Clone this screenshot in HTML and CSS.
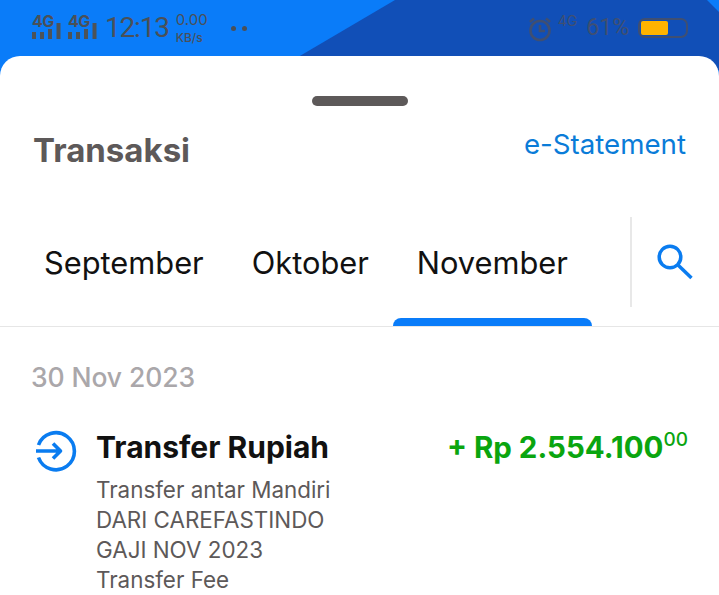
FILE: index.html
```html
<!DOCTYPE html>
<html lang="id">
<head>
  <meta charset="UTF-8">
  <meta name="viewport" content="width=device-width, initial-scale=1.0">
  <title>Transaksi</title>
  <link rel="stylesheet" href="styles.css">
</head>
<body>
  <div class="screen">
    <div class="status-bar">
      <div class="status-left">
        <div class="signal">
          <span class="signal-label">4G</span>
          <svg width="29" height="16" viewBox="0 0 29 16"><path d="M0 9h4v7H0zM8 9h4v7H8zM16 6h4v10h-4zM24.500 0h4v16h-4z" fill="#4d5358"/></svg>
        </div>
        <div class="signal">
          <span class="signal-label">4G</span>
          <svg width="29" height="16" viewBox="0 0 29 16"><path d="M0 9h4v7H0zM8 9h4v7H8zM16 6h4v10h-4zM24.500 0h4v16h-4z" fill="#4d5358"/></svg>
        </div>
        <span class="clock">12:13</span>
        <div class="speed">
          <span class="speed-value">0.00</span>
          <span class="speed-unit">KB/s</span>
        </div>
        <div class="dots"><span></span><span></span></div>
      </div>
      <div class="status-right">
        <svg class="alarm" width="26" height="26" viewBox="0 0 26 26" fill="none" stroke="#3f4f72" stroke-width="2.600">
          <circle cx="13" cy="14.500" r="9.500"/>
          <path d="M13 9v6h5M3 6l4-3.500M23 6l-4-3.500"/>
        </svg>
        <span class="net-small">4G</span>
        <span class="battery-text">61%</span>
        <div class="battery"><div class="battery-fill"></div></div>
      </div>
    </div>

    <div class="sheet">
      <div class="handle"></div>
      <div class="sheet-head">
        <h1>Transaksi</h1>
        <a class="statement">e-Statement</a>
      </div>
      <div class="tabs">
        <div class="tab">September</div>
        <div class="tab">Oktober</div>
        <div class="tab active">November</div>
        <div class="tab-search">
          <svg width="36" height="36" viewBox="0 0 36 36" fill="none" stroke="#0a7cf0" stroke-width="3.500">
            <circle cx="13" cy="13" r="10.800"/>
            <path d="M21 21l13.500 13"/>
          </svg>
        </div>
      </div>
      <div class="list">
        <div class="date">30 Nov 2023</div>
        <div class="trx">
          <svg class="trx-icon" width="42" height="42" viewBox="0 0 42 42" fill="none" stroke="#0a7cf0" stroke-width="3.600" stroke-linejoin="round">
            <path d="M3.500 15A18.500 18.500 0 1 1 3.500 27.500"/>
            <path d="M1 21h24M18 13.500l7.500 7.500-7.500 7.500"/>
          </svg>
          <div class="trx-body">
            <div class="trx-top">
              <div class="trx-title">Transfer Rupiah</div>
              <div class="trx-amount">+ Rp 2.554.100<sup>00</sup></div>
            </div>
            <div class="trx-desc">Transfer antar Mandiri</div>
            <div class="trx-desc">DARI CAREFASTINDO</div>
            <div class="trx-desc">GAJI NOV 2023</div>
            <div class="trx-desc">Transfer Fee</div>
          </div>
        </div>
      </div>
    </div>
  </div>
</body>
</html>
```

FILE: styles.css
```css
* {
  box-sizing: border-box;
}

html, body {
  margin: 0;
  height: 100%;
  overflow: hidden;
}

body {
  background-color: #0a7cf9;
  font-family: 'Inter', 'Liberation Sans', sans-serif;
}

.screen {
  position: relative;
  height: 595px;
  display: flex;
  flex-direction: column;
  background-color: #0a7cf9;
}

/* dark diagonal behind the status bar */
.screen::before {
  content: '';
  position: absolute;
  top: 0;
  left: 0;
  right: 0;
  height: 70px;
  background-color: #114fb7;
  clip-path: polygon(395px 0, 707px 0, 719px 12px, 719px 70px, 276px 70px);
}

.status-bar {
  position: relative;
  height: 56px;
  padding: 0 31px 0 32px;
  display: flex;
  justify-content: space-between;
  align-items: center;
  color: #4a5058;
}

.status-left {
  display: flex;
  align-items: center;
}

.signal {
  width: 36px;
  display: flex;
  flex-direction: column;
  margin-top: -2px;
}

.signal-label {
  font-size: 16px;
  line-height: 12px;
  font-weight: 700;
  letter-spacing: -0.5px;
}

.signal svg {
  margin-top: -4px;
}

.clock {
  margin-left: 1px;
  font-size: 28px;
  line-height: 34px;
  letter-spacing: -1.2px;
  font-family: 'Roboto', sans-serif;
}

.speed {
  display: flex;
  flex-direction: column;
  margin-left: 7px;
  margin-top: 2px;
}

.speed-value {
  font-size: 15px;
  line-height: 18px;
}

.speed-unit {
  font-size: 12px;
  line-height: 18px;
  font-weight: 500;
}

.dots {
  display: flex;
  gap: 6px;
  margin-left: 23px;
}

.dots span {
  width: 5px;
  height: 5px;
  border-radius: 50%;
  background-color: #4a5058;
}

.status-right {
  display: flex;
  align-items: center;
  color: #3f4f72;
}

.alarm {
  margin-top: 1px;
}

.net-small {
  font-size: 14px;
  line-height: 12px;
  margin: -14px 0 0 5px;
}

.battery-text {
  font-size: 23px;
  line-height: 28px;
  margin-left: 9px;
  font-family: 'Roboto', sans-serif;
}

.battery {
  width: 50px;
  height: 20px;
  margin-left: 9px;
  padding: 1px;
  border: 2px solid #3f4f72;
  border-radius: 7px;
}

.battery-fill {
  width: 27px;
  height: 14px;
  background-color: #ffb300;
  border-radius: 2px;
}

.sheet {
  position: relative;
  flex: 1;
  background-color: white;
  border-radius: 20px 20px 0 0;
  overflow: hidden;
}

.handle {
  width: 96px;
  height: 10px;
  margin: 40px auto 0;
  background-color: #5d5959;
  border-radius: 5px;
}

.sheet-head {
  display: flex;
  justify-content: space-between;
  align-items: flex-start;
  padding: 0 33px 0 33px;
  margin-top: 23px;
}

.sheet-head h1 {
  margin: 0;
  font-size: 33px;
  line-height: 42px;
  font-weight: 700;
  color: #5d5959;
}

.statement {
  margin-top: -1px;
  font-size: 27.700px;
  line-height: 32px;
  color: #0a7cd8;
}

.tabs {
  display: flex;
  height: 110px;
  margin-top: 46px;
  border-bottom: 1px solid #e6e6e6;
}

.tab {
  position: relative;
  padding: 0 24px 18px;
  font-size: 30.800px;
  display: flex;
  align-items: center;
  color: #111;
}

.tab:first-child {
  margin-left: 20px;
}

.tab.active::after {
  content: '';
  position: absolute;
  left: 0;
  right: 0;
  bottom: 0;
  height: 8px;
  background-color: #0a7cf9;
  border-radius: 8px 8px 0 0;
}

.tab-search {
  height: 90px;
  margin-left: auto;
  width: 89px;
  border-left: 2px solid #e8e8e8;
  display: flex;
  align-items: center;
  padding-left: 25px;
}

.list {
  padding: 33px 31px 0 31px;
}

.date {
  font-size: 26.500px;
  line-height: 34px;
  font-weight: 500;
  letter-spacing: -0.1px;
  color: #aaa7aa;
}

.trx {
  display: flex;
  margin-top: 33px;
}

.trx-icon {
  flex: none;
  margin: 3px 0 0 4px;
}

.trx-body {
  flex: 1;
  margin-left: 19px;
}

.trx-top {
  display: flex;
  justify-content: space-between;
  margin-bottom: 8px;
}

.trx-title {
  font-size: 30px;
  line-height: 40px;
  font-weight: 700;
  color: #111;
}

.trx-amount {
  font-size: 29.500px;
  line-height: 40px;
  font-weight: 700;
  color: #0aa50f;
}

.trx-amount sup {
  font-size: 19px;
  line-height: 0;
  font-weight: 500;
  vertical-align: 12px;
}

.trx-desc {
  font-size: 22.400px;
  line-height: 30px;
  color: #5d5959;
}
```
